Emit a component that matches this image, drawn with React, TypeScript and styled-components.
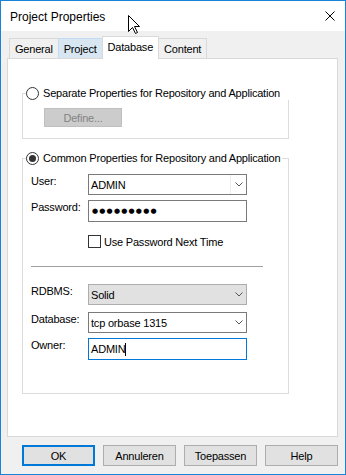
import React from 'react';
import styled, { createGlobalStyle } from 'styled-components';

const GlobalStyle = createGlobalStyle`
    html, body {
        margin: 0;
        padding: 0;
        background: #ffffff;
    }
    body {
        font-family: "Liberation Sans", Arial, sans-serif;
        font-size: 11px;
        letter-spacing: -0.2px;
        color: #000000;
    }
`;

const Window = styled.div`
    position: relative;
    width: 346px;
    height: 475px;
    box-sizing: border-box;
    border: 1px solid #1883d7;
    background: #f0f0f0;
    display: flex;
    flex-direction: column;
`;

const TitleBar = styled.div`
    height: 30px;
    flex: none;
    background: #ffffff;
    display: flex;
    align-items: center;
    justify-content: space-between;
    padding: 0 10px 0 9px;
`;

const Title = styled.span`
    font-size: 12px;
    letter-spacing: 0;
    padding-top: 1px;
`;

const Cursor = styled.svg`
    position: absolute;
    left: 127px;
    top: 14px;
`;

const Body = styled.div`
    flex: 1;
    display: flex;
    flex-direction: column;
    padding: 5px 7px 8px 6px;
    min-height: 0;
`;

const TabStrip = styled.div`
    height: 23px;
    flex: none;
    display: flex;
    align-items: flex-end;
    padding-left: 2px;
    margin-bottom: -1px;
    position: relative;
    z-index: 1;
`;

const Tab = styled.div<{ $active?: boolean; $hover?: boolean }>`
    box-sizing: border-box;
    height: ${p => (p.$active ? 23 : 20)}px;
    margin-bottom: ${p => (p.$active ? 0 : 1)}px;
    padding: 0 5px ${p => (p.$active ? 3 : 0)}px;
    display: flex;
    align-items: center;
    white-space: nowrap;
    border: 1px solid ${p => (p.$hover ? '#c3dcf2' : '#d9d9d9')};
    border-bottom: none;
    background: ${p => (p.$active ? '#ffffff' : p.$hover ? '#d8e6f2' : '#f0f0f0')};
    position: relative;
    z-index: ${p => (p.$active || p.$hover ? 1 : 0)};

    & + & {
        margin-left: -1px;
    }
`;

const Panel = styled.div`
    flex: 1;
    background: #ffffff;
    border: 1px solid #d9d9d9;
    padding: 28px 0 0 14px;
    display: flex;
    flex-direction: column;
    align-items: flex-start;
`;

const Group = styled.fieldset<{ $top?: number }>`
    width: 267px;
    box-sizing: border-box;
    margin: ${p => p.$top ?? 0}px 0 0;
    padding: 0;
    border: 1px solid #dcdcdc;
    min-inline-size: 0;
`;

const Legend = styled.legend<{ $tail?: number }>`
    display: flex;
    align-items: center;
    gap: 4px;
    height: 13px;
    line-height: 13px;
    white-space: nowrap;
    margin-left: 3px;
    padding: 0 ${p => p.$tail ?? 2}px 0 0;
`;

const Radio = styled.span<{ $checked?: boolean }>`
    box-sizing: border-box;
    flex: none;
    width: 13px;
    height: 13px;
    border-radius: 50%;
    border: 1px solid #333333;
    background: #ffffff;
    display: flex;
    align-items: center;
    justify-content: center;

    &::after {
        content: '';
        width: 7px;
        height: 7px;
        border-radius: 50%;
        background: ${p => (p.$checked ? '#333333' : 'transparent')};
    }
`;

const GroupContent = styled.div<{ $pad: string }>`
    padding: ${p => p.$pad};
    display: flex;
    flex-direction: column;
    align-items: flex-start;
`;

const DisabledButton = styled.div`
    box-sizing: border-box;
    width: 78px;
    height: 19px;
    background: #cccccc;
    border: 1px solid #bfbfbf;
    color: #838383;
    display: flex;
    align-items: center;
    justify-content: center;
`;

const Row = styled.div<{ $top?: number }>`
    display: grid;
    grid-template-columns: 57px 159px;
    align-items: start;
    margin-top: ${p => p.$top ?? 0}px;
`;

const Label = styled.span`
    padding-top: 1px;
    line-height: 13px;
`;

const Combo = styled.div<{ $flat?: boolean }>`
    box-sizing: border-box;
    width: 159px;
    height: 21px;
    border: 1px solid ${p => (p.$flat ? '#adadad' : '#7a7a7a')};
    background: ${p => (p.$flat ? '#e1e1e1' : '#ffffff')};
    display: flex;
    align-items: center;
    padding-left: 2px;
`;

const ComboText = styled.span`
    flex: 1;
`;

const ArrowBox = styled.span<{ $divider?: boolean }>`
    box-sizing: border-box;
    width: 16px;
    height: 100%;
    display: flex;
    align-items: center;
    justify-content: center;
    border-left: 1px solid ${p => (p.$divider ? '#e9eef4' : 'transparent')};
`;

const Edit = styled.div<{ $focused?: boolean }>`
    box-sizing: border-box;
    width: 159px;
    height: 22px;
    border: 1px solid ${p => (p.$focused ? '#0078d7' : '#7a7a7a')};
    background: #ffffff;
    display: flex;
    align-items: center;
    padding-left: 2px;
`;

const Dots = styled.span`
    font-family: "DejaVu Sans", sans-serif;
    font-size: 7px;
    letter-spacing: 1.2px;
    padding-left: 1px;
`;

const Caret = styled.span`
    display: inline-block;
    width: 1px;
    height: 13px;
    background: #000000;
`;

const CheckLine = styled.label`
    grid-column: 2;
    display: flex;
    align-items: center;
    gap: 3px;
    height: 13px;
    white-space: nowrap;
`;

const Check = styled.span`
    box-sizing: border-box;
    width: 13px;
    height: 13px;
    border: 1px solid #333333;
    background: #ffffff;
`;

const Separator = styled.div`
    width: 232px;
    height: 1px;
    margin-top: 18px;
    background: #a0a0a0;
`;

const ButtonRow = styled.div`
    display: flex;
    justify-content: flex-end;
    gap: 8px;
    margin-top: 8px;
    flex: none;
`;

const Button = styled.div<{ $default?: boolean }>`
    box-sizing: border-box;
    width: 73px;
    height: 21px;
    display: flex;
    align-items: center;
    justify-content: center;
    background: #e1e1e1;
    border: ${p => (p.$default ? '2px solid #0078d7' : '1px solid #adadad')};
`;

const Chevron = () => (
    <svg width="8" height="5" viewBox="0 0 8 5">
        <polyline points="0.5,0.5 4,4 7.5,0.5" fill="none" stroke="#555555" strokeWidth="1" />
    </svg>
);

const App = () => {
    return (
        <Window>
            <GlobalStyle />
            <TitleBar>
                <Title>Project Properties</Title>
                <svg width="10" height="10" viewBox="0 0 10 10">
                    <path d="M0.5 0.5 L9.5 9.5 M9.5 0.5 L0.5 9.5" stroke="#000000" strokeWidth="1" />
                </svg>
            </TitleBar>
            <Cursor width="13" height="20" viewBox="0 0 13 20">
                <path
                    d="M0.5 0.5 L0.5 16.5 L4.5 12.5 L7.5 18.5 L9.5 17.5 L6.5 11.5 L11.5 11.5 Z"
                    fill="#ffffff"
                    stroke="#000000"
                    strokeWidth="1"
                    strokeLinejoin="miter"
                />
            </Cursor>
            <Body>
                <TabStrip>
                    <Tab>General</Tab>
                    <Tab $hover>Project</Tab>
                    <Tab $active>Database</Tab>
                    <Tab>Content</Tab>
                </TabStrip>
                <Panel>
                    <Group>
                        <Legend $tail={9}>
                            <Radio />
                            <span>Separate Properties for Repository and Application</span>
                        </Legend>
                        <GroupContent $pad="8px 0 11px 21px">
                            <DisabledButton>Define...</DisabledButton>
                        </GroupContent>
                    </Group>
                    <Group $top={13}>
                        <Legend>
                            <Radio $checked />
                            <span>Common Properties for Repository and Application</span>
                        </Legend>
                        <GroupContent $pad="9px 0 33px 8px">
                            <Row>
                                <Label>User:</Label>
                                <Combo>
                                    <ComboText>ADMIN</ComboText>
                                    <ArrowBox $divider>
                                        <Chevron />
                                    </ArrowBox>
                                </Combo>
                            </Row>
                            <Row $top={5}>
                                <Label>Password:</Label>
                                <Edit>
                                    <Dots>●●●●●●●●●</Dots>
                                </Edit>
                            </Row>
                            <Row $top={13}>
                                <CheckLine>
                                    <Check />
                                    <span>Use Password Next Time</span>
                                </CheckLine>
                            </Row>
                            <Separator />
                            <Row $top={17}>
                                <Label>RDBMS:</Label>
                                <Combo $flat>
                                    <ComboText>Solid</ComboText>
                                    <ArrowBox>
                                        <Chevron />
                                    </ArrowBox>
                                </Combo>
                            </Row>
                            <Row $top={7}>
                                <Label>Database:</Label>
                                <Combo>
                                    <ComboText>tcp orbase 1315</ComboText>
                                    <ArrowBox>
                                        <Chevron />
                                    </ArrowBox>
                                </Combo>
                            </Row>
                            <Row $top={5}>
                                <Label>Owner:</Label>
                                <Edit $focused>
                                    <span>ADMIN</span>
                                    <Caret />
                                </Edit>
                            </Row>
                        </GroupContent>
                    </Group>
                </Panel>
                <ButtonRow>
                    <Button $default>OK</Button>
                    <Button>Annuleren</Button>
                    <Button>Toepassen</Button>
                    <Button>Help</Button>
                </ButtonRow>
            </Body>
        </Window>
    );
};

export default App;
